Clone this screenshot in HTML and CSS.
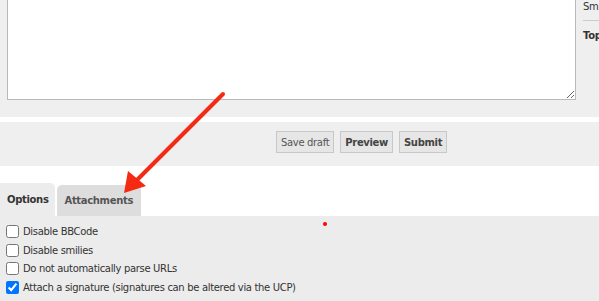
FILE: index.html
```
<!DOCTYPE html>
<html lang="en">
<head>
    <meta charset="UTF-8">
    <title>Post a reply</title>
    <link rel="stylesheet" href="styles.css">
</head>
<body>

<div class="editor-panel">
    <textarea class="message-box"></textarea>
    <div class="sidebar">
        <div class="sidebar-item">Smilies</div>
        <div class="sidebar-title">Topic review</div>
    </div>
</div>

<div class="submit-panel">
    <button class="button">Save draft</button>
    <button class="button button-bold">Preview</button>
    <button class="button button-bold">Submit</button>
</div>

<div class="tabs">
    <span class="tab active">Options</span>
    <span class="tab">Attachments</span>
</div>

<div class="options-panel">
    <label class="option"><input type="checkbox"> Disable BBCode</label>
    <label class="option"><input type="checkbox"> Disable smilies</label>
    <label class="option"><input type="checkbox"> Do not automatically parse URLs</label>
    <label class="option"><input type="checkbox" checked> Attach a signature (signatures can be altered via the UCP)</label>
    <span class="marker-dot"></span>
</div>

<svg class="arrow" width="599" height="301" viewBox="0 0 599 301">
    <line x1="223" y1="94" x2="136" y2="181" stroke="#f42a12" stroke-width="4" stroke-linecap="round"/>
    <polygon points="124,193 128,171 146,186" fill="#f42a12"/>
</svg>

</body>
</html>
```

FILE: styles.css
```
body {
    margin: 0;
    font-family: "DejaVu Sans", Verdana, sans-serif;
    font-size: 10px;
    letter-spacing: -0.33px;
    color: #333;
    background-color: #fff;
    width: 599px;
    height: 301px;
    overflow: hidden;
    position: relative;
}

.editor-panel {
    display: flex;
    height: 117px;
    background-color: #efefef;
}

.message-box {
    box-sizing: border-box;
    margin: 0 0 0 7px;
    width: 569px;
    height: 100px;
    border: 1px solid #b9b9b9;
    border-top: 0;
    background-color: #fff;
    resize: vertical;
}

.sidebar {
    flex: 1;
    padding-left: 7px;
    font-size: 10px;
    white-space: nowrap;
    overflow: hidden;
}

.sidebar-item {
    padding: 1px 0 8px;
    border-bottom: 1px solid #ccc;
}

.sidebar-title {
    margin-top: 9px;
    font-weight: bold;
}

.submit-panel {
    display: flex;
    gap: 6px;
    margin-top: 5px;
    height: 44px;
    box-sizing: border-box;
    padding: 9px 0 0 276px;
    background-color: #efefef;
}

.button {
    height: 22px;
    padding: 0 4px;
    border: 1px solid #c8c8c8;
    background-color: #e6e6e6;
    font-family: inherit;
    font-size: 10px;
    letter-spacing: inherit;
    color: #555;
}

.button-bold {
    font-weight: bold;
    color: #444;
}

.tabs {
    display: flex;
    align-items: flex-end;
    gap: 2px;
    margin-top: 17px;
    height: 33px;
}

.tab {
    display: flex;
    align-items: center;
    height: 31px;
    padding: 0 8px;
    background-color: #dddddd;
    font-weight: bold;
    color: #555;
    border-radius: 5px 5px 0 0;
}

.tab.active {
    height: 33px;
    padding: 0 6px 0 7px;
    background-color: #ececec;
    color: #333;
    border-top-left-radius: 0;
}

.options-panel {
    position: relative;
    height: 85px;
    padding: 6px 6px 0;
    background-color: #ececec;
}

.option {
    display: flex;
    align-items: center;
    gap: 4px;
    height: 18.7px;
    color: #333;
}

.option input {
    margin: 0;
    width: 13px;
    height: 13px;
}

.marker-dot {
    position: absolute;
    left: 323px;
    top: 6px;
    width: 4px;
    height: 4px;
    border-radius: 50%;
    background-color: #f00;
}

.arrow {
    position: absolute;
    left: 0;
    top: 0;
    pointer-events: none;
}
```
